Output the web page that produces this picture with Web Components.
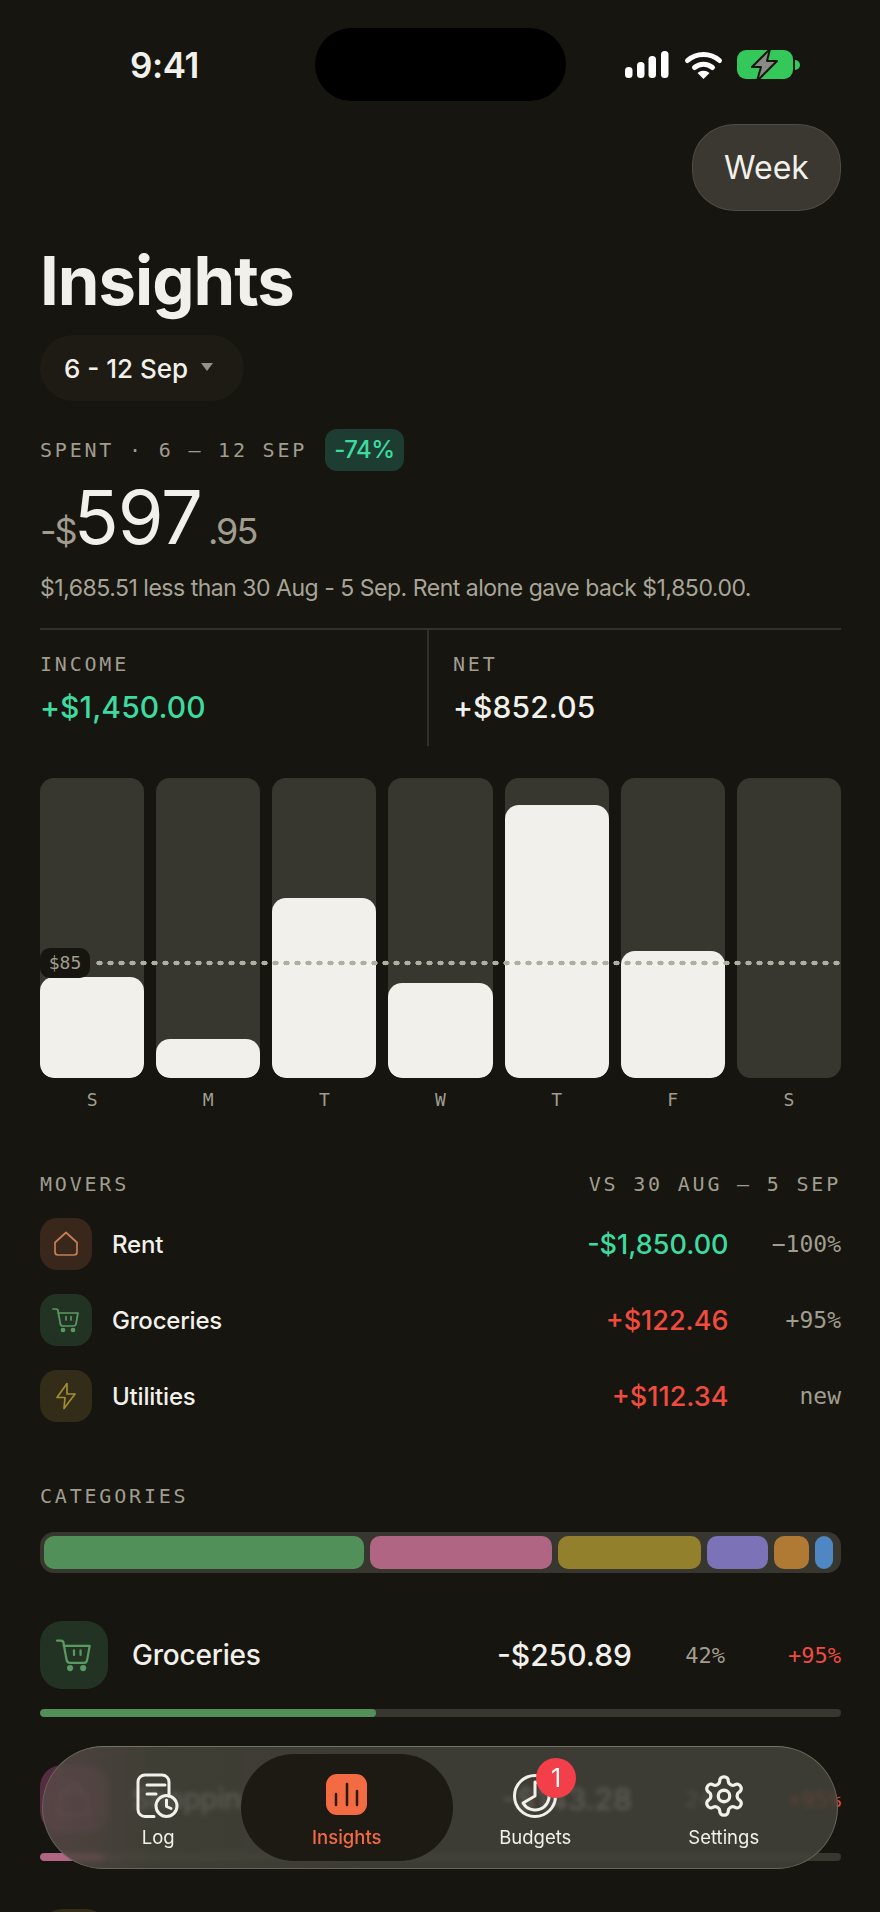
<!DOCTYPE html>
<html>
<head>
<meta charset="utf-8">
<title>Insights</title>
<style>
  html, body { margin: 0; height: 1912px; overflow: hidden; background: #16150f; }
  body { position: relative; font-family: Inter, "Liberation Sans", sans-serif; color: #f2f0ea; }
  main { padding: 0 39px 0 40px; }
</style>
</head>
<body>
<main>
  <status-bar time="9:41"></status-bar>
  <range-head title="Insights" range="6 - 12 Sep" mode="Week"></range-head>
  <spend-summary></spend-summary>
  <week-chart></week-chart>
  <section-label left="MOVERS" right="VS 30 AUG – 5 SEP" top="60"></section-label>
  <mover-row icon="house" name="Rent" amount="-$1,850.00" tone="good" pct="−100%"></mover-row>
  <mover-row icon="cart" name="Groceries" amount="+$122.46" tone="bad" pct="+95%"></mover-row>
  <mover-row icon="bolt" name="Utilities" amount="+$112.34" tone="bad" pct="new"></mover-row>
  <section-label left="CATEGORIES" top="62"></section-label>
  <cat-stack></cat-stack>
  <cat-row icon="cart" name="Groceries" amount="-$250.89" share="42%" change="+95%" fill="42" color="#52905a"></cat-row>
  <cat-row icon="bag" name="Shopping" amount="-$143.28" share="24%" change="+95%" fill="8" color="#b06583"></cat-row>
  <cat-row icon="bolt" fill="19" color="#93802c"></cat-row>
</main>
<tab-bar></tab-bar>

<script>
const MONO = '"DejaVu Sans Mono", "Liberation Mono", monospace';
const ICONS = {
  house: { bg: '#3a271c', stroke: '#c47f52', d: 'M15 24.5 26 14.5 37 24.5V34a3 3 0 0 1-3 3H18a3 3 0 0 1-3-3Z' },
  cart: { bg: '#223323', stroke: '#5a9a62', d: 'M13 15h3a2 2 0 0 1 2 2l2.4 13a2.5 2.5 0 0 0 2.5 2h10.6a2.5 2.5 0 0 0 2.5-2L38 19H18M26 22.5v3.5M31 22.5v3.5', dots: [[23, 36], [33, 36]] },
  bolt: { bg: '#322c18', stroke: '#a08d30', d: 'M27 13.5 17 27.5h8L24 38.5 35 24h-8Z' },
  bag: { bg: '#552c40', stroke: '#b06583', d: 'M17 21h18l2 15a2 2 0 0 1-2 2H17a2 2 0 0 1-2-2ZM21 21v-2a5 5 0 0 1 10 0v2' }
};

function tileSvg(name, size) {
  const ic = ICONS[name];
  const dots = (ic.dots || []).map(p => `<circle cx="${p[0]}" cy="${p[1]}" r="1.5" fill="${ic.stroke}"/>`).join('');
  return `<svg width="${size}" height="${size}" viewBox="0 0 52 52" fill="none" stroke="${ic.stroke}" stroke-width="1.7" stroke-linecap="round" stroke-linejoin="round"><path d="${ic.d}"/>${dots}</svg>`;
}

class StatusBar extends HTMLElement {
  connectedCallback() {
    this.attachShadow({mode: 'open'}).innerHTML = `
      <style>
        :host { display: grid; grid-template-columns: 275px 251px 1fr; height: 73px; padding-top: 28px; margin: 0 -39px 0 0; align-items: center; }
        .time { padding-left: 90px; font-size: 35px; font-weight: 600; letter-spacing: -.4px; }
        .island { height: 73px; border-radius: 37px; background: #000; }
        .icons { padding-left: 59px; display: flex; }
      </style>
      <div class="time">${this.getAttribute('time')}</div>
      <div class="island"></div>
      <div class="icons">
        <svg width="176" height="30" viewBox="0 0 176 30">
          <g fill="#fff">
            <rect x="0" y="17" width="7.5" height="11" rx="3.5"/>
            <rect x="12" y="12" width="7.5" height="16" rx="3.5"/>
            <rect x="23.500" y="6" width="7.5" height="22" rx="3.5"/>
            <rect x="36" y="1" width="7.5" height="27" rx="3.5"/>
          </g>
          <g fill="none" stroke="#fff" stroke-width="5" stroke-linecap="round">
            <path d="M62.500 10.500a24 24 0 0 1 32 0"/>
            <path d="M69.500 17.500a14 14 0 0 1 18 0"/>
          </g>
          <path d="M72.500 23a9 9 0 0 1 12 0l-6 6z" fill="#fff"/>
          <rect x="112" y="0" width="56" height="29" rx="9" fill="#34c759"/>
          <path d="M170 10a5 5 0 0 1 0 10z" fill="#34c759"/>
          <path d="M145 -1 127 17h9l-4 14 20-20h-10z" fill="#8a8a84" stroke="#16150f" stroke-width="2" stroke-linejoin="round"/>
        </svg>
      </div>`;
  }
}

class RangeHead extends HTMLElement {
  connectedCallback() {
    this.attachShadow({mode: 'open'}).innerHTML = `
      <style>
        :host { display: block; }
        .top { display: flex; justify-content: flex-end; margin-top: 23px; }
        .mode { width: 147px; height: 85px; display: flex; align-items: center; justify-content: center; border: 1px solid #4e4c44; border-radius: 43px / 40px; background: #3a3831; font-size: 32px; color: #f2f0ea; }
        h1 { margin: 32px 0 0; font-size: 67px; line-height: 76px; font-weight: 700; letter-spacing: -1px; color: #f2f0ea; }
        .range { display: flex; width: fit-content; align-items: center; gap: 13px; height: 66px; margin-top: 16px; padding: 0 31px 0 24px; border-radius: 33px; background: #1d1b14; font-size: 26px; font-weight: 500; }
        .tri { width: 0; height: 0; margin-top: -3px; border: 6.500px solid transparent; border-top: 8px solid #94918a; border-bottom: 0; }
      </style>
      <div class="top"><div class="mode">${this.getAttribute('mode')}</div></div>
      <h1>${this.getAttribute('title')}</h1>
      <div class="range"><span>${this.getAttribute('range')}</span><span class="tri"></span></div>`;
  }
}

class SpendSummary extends HTMLElement {
  connectedCallback() {
    this.attachShadow({mode: 'open'}).innerHTML = `
      <style>
        :host { display: block; margin-top: 28px; }
        .label { font-family: ${MONO}; font-size: 20px; letter-spacing: 2.8px; color: #a09d90; }
        .spent { display: flex; align-items: center; gap: 18px; height: 42px; }
        .badge { padding: 0 9px; height: 42px; line-height: 42px; border-radius: 12px; background: #1e3d32; color: #3ddba0; font-size: 24px; font-weight: 500; letter-spacing: -.5px; }
        .amount { display: flex; align-items: baseline; height: 74px; margin-top: 9px; line-height: 74px; color: #a09d90; font-size: 36px; letter-spacing: -2px; }
        .amount b { font-size: 74px; font-weight: 400; color: #f2f0ea; letter-spacing: -1px; margin: 0 6px 0 -2px; }
        .desc { margin-top: 19px; font-size: 23px; line-height: 30px; color: #a8a598; letter-spacing: -.48px; }
        .split { display: grid; grid-template-columns: 387px 1fr; height: 116px; margin-top: 25px; border-top: 2px solid #33322a; }
        .split > div { padding-top: 22px; }
        .split > div + div { padding-left: 24px; border-left: 2px solid #33322a; }
        .val { margin-top: 13px; font-size: 30px; line-height: 36px; font-weight: 500; color: #f2f0ea; letter-spacing: .1px; }
        .val.good { color: #3ddba0; }
      </style>
      <div class="spent"><span class="label">SPENT · 6 – 12 SEP</span><span class="badge">-74%</span></div>
      <div class="amount"><span>-$</span><b>597</b><span>.95</span></div>
      <div class="desc">$1,685.51 less than 30 Aug - 5 Sep. Rent alone gave back $1,850.00.</div>
      <div class="split">
        <div><div class="label">INCOME</div><div class="val good">+$1,450.00</div></div>
        <div><div class="label">NET</div><div class="val">+$852.05</div></div>
      </div>`;
  }
}

class WeekChart extends HTMLElement {
  connectedCallback() {
    const days = [['S', 101], ['M', 39], ['T', 180], ['W', 95], ['T', 273], ['F', 127], ['S', 0]];
    const cols = days.map(d => `
      <div class="col">
        <div class="track"><div class="bar" style="height:${d[1]}px"></div></div>
        <div class="day">${d[0]}</div>
      </div>`).join('');
    this.attachShadow({mode: 'open'}).innerHTML = `
      <style>
        :host { display: block; position: relative; margin-top: 32px; }
        .cols { display: grid; grid-template-columns: repeat(7, 1fr); gap: 12px; }
        .track { position: relative; height: 300px; border-radius: 14px; background: #38372f; overflow: hidden; }
        .bar { position: absolute; left: 0; right: 0; bottom: 0; border-radius: 14px; background: #f2f0ea; }
        .day { margin-top: 10px; height: 24px; line-height: 24px; text-align: center; font-family: ${MONO}; font-size: 18px; color: #a09d90; }
        .avg { position: absolute; left: 54px; right: 0; top: 182px; height: 6px; background: radial-gradient(ellipse 3.4px 2.6px, #b0aea3 85%, transparent 100%) 0 0 / 11px 6px repeat-x; }
        .tag { position: absolute; left: 0; top: 170px; width: 50px; height: 30px; line-height: 30px; text-align: center; border-radius: 10px; background: #16150f; font-family: ${MONO}; font-size: 18px; color: #a09d90; }
      </style>
      <div class="cols">${cols}</div>
      <div class="avg"></div>
      <div class="tag">$85</div>`;
  }
}

class SectionLabel extends HTMLElement {
  connectedCallback() {
    this.attachShadow({mode: 'open'}).innerHTML = `
      <style>
        :host { display: flex; justify-content: space-between; margin-top: ${this.getAttribute('top')}px; margin-bottom: -2px; height: 24px; line-height: 24px; font-family: ${MONO}; font-size: 20px; letter-spacing: 2.8px; color: #a09d90; }
      </style>
      <span>${this.getAttribute('left')}</span><span>${this.getAttribute('right') || ''}</span>`;
  }
}

class MoverRow extends HTMLElement {
  connectedCallback() {
    const ic = this.getAttribute('icon');
    this.attachShadow({mode: 'open'}).innerHTML = `
      <style>
        :host { display: flex; align-items: center; height: 52px; margin-top: 24px; }
        .tile { flex: none; width: 52px; height: 52px; border-radius: 17px; background: ${ICONS[ic].bg}; }
        svg { display: block; }
        .name { flex: 1; margin-left: 20px; font-size: 24px; font-weight: 500; color: #f2f0ea; letter-spacing: -.2px; }
        .amt { font-size: 27px; font-weight: 500; }
        .good { color: #3ddba0; }
        .bad { color: #ef4c3f; }
        .pct { width: 112.500px; text-align: right; font-family: ${MONO}; font-size: 23px; color: #a09d90; }
      </style>
      <div class="tile">${tileSvg(ic, 52)}</div>
      <div class="name">${this.getAttribute('name')}</div>
      <div class="amt ${this.getAttribute('tone')}">${this.getAttribute('amount')}</div>
      <div class="pct">${this.getAttribute('pct')}</div>`;
  }
}

class CatStack extends HTMLElement {
  connectedCallback() {
    const segs = [[320, '#52905a'], [182, '#b06583'], [143, '#93802c'], [61, '#7b72b8'], [35, '#b07a34'], [18, '#4f87c4']];
    this.attachShadow({mode: 'open'}).innerHTML = `
      <style>
        :host { display: flex; gap: 6px; height: 33px; margin-top: 26px; padding: 4px; border-radius: 14px; background: #38372f; overflow: hidden; }
        div { border-radius: 10px; }
      </style>
      ${segs.map(s => `<div style="flex:none;width:${s[0]}px;background:${s[1]}"></div>`).join('')}`;
  }
}

class CatRow extends HTMLElement {
  connectedCallback() {
    const ic = this.getAttribute('icon');
    const name = this.getAttribute('name');
    this.attachShadow({mode: 'open'}).innerHTML = `
      <style>
        :host { display: block; margin-top: 48px; }
        .row { display: flex; align-items: center; height: 68px; }
        .tile { flex: none; width: 68px; height: 68px; border-radius: 22px; background: ${ICONS[ic].bg}; }
        svg { display: block; }
        .name { flex: 1; margin-left: 24px; font-size: 28px; font-weight: 500; letter-spacing: -.2px; }
        .amt { font-size: 30px; font-weight: 500; }
        .share { width: 93px; text-align: right; font-family: ${MONO}; font-size: 22px; color: #a09d90; }
        .chg { width: 116px; text-align: right; font-family: ${MONO}; font-size: 22px; color: #ef4c3f; }
        .bar { height: 8px; margin-top: 20px; border-radius: 4px; background: #38372f; overflow: hidden; }
        .fill { height: 100%; border-radius: 4px; }
      </style>
      <div class="row">
        <div class="tile">${tileSvg(ic, 68)}</div>
        ${name ? `<div class="name">${name}</div>
        <div class="amt">${this.getAttribute('amount')}</div>
        <div class="share">${this.getAttribute('share')}</div>
        <div class="chg">${this.getAttribute('change')}</div>` : ''}
      </div>
      <div class="bar"><div class="fill" style="width:${this.getAttribute('fill')}%;background:${this.getAttribute('color')}"></div></div>`;
  }
}

class TabBar extends HTMLElement {
  connectedCallback() {
    this.attachShadow({mode: 'open'}).innerHTML = `
      <style>
        :host { position: absolute; left: 42px; top: 1746px; width: 796px; height: 123px; box-sizing: border-box; display: grid; grid-template-columns: repeat(4, 188.5px); padding: 7px 21px; border: 1.5px solid #66645a; border-top-color: #6e7562; border-radius: 62px; background: linear-gradient(90deg, rgba(150, 90, 110, .22), rgba(80, 84, 66, .12) 14%, transparent 40%), rgba(68, 66, 58, .86); -webkit-backdrop-filter: blur(2.5px); backdrop-filter: blur(2.5px); }
        .tab { position: relative; display: flex; flex-direction: column; align-items: center; padding-top: 19px; font-size: 18.5px; line-height: 26px; color: #f2f0ea; }
        .tab svg { display: block; height: 46px; margin-bottom: 5px; }
        .on { margin: 0 -12px; border-radius: 54px; background: #1c1a13; color: #f26b43; font-weight: 500; }
        .dot { position: absolute; left: 95px; top: 4px; width: 40px; height: 40px; line-height: 40px; border-radius: 50%; background: #f23f4a; color: #fff; text-align: center; font-size: 25px; }
      </style>
      <div class="tab">
        <svg width="46" height="46" viewBox="0 0 46 46" fill="none" stroke="#f2f0ea" stroke-width="3" stroke-linecap="round" stroke-linejoin="round">
          <path d="M19 43.500H10a7 7 0 0 1-7-7V9a7 7 0 0 1 7-7h17a7 7 0 0 1 7 7v14"/>
          <path d="M12 12h18M12 21h9"/>
          <circle cx="31.500" cy="33" r="10.500"/>
          <path d="M31.500 27v6.500l4.500 2"/>
        </svg>
        <span>Log</span>
      </div>
      <div class="tab on">
        <svg width="46" height="46" viewBox="0 0 46 46" fill="none">
          <rect x="2" y="1" width="41" height="41" rx="11" fill="#f26b43"/>
          <path d="M12 21v11M23 11v21M33 18v14" stroke="#2a1a12" stroke-width="2.500" stroke-linecap="round"/>
        </svg>
        <span>Insights</span>
      </div>
      <div class="tab">
        <svg width="46" height="46" viewBox="0 0 46 46" fill="none" stroke="#f2f0ea" stroke-width="3" stroke-linecap="round" stroke-linejoin="round">
          <circle cx="23" cy="23" r="20.500"/>
          <path d="M23 9a14 14 0 1 1-12 21l12-7Z"/>
        </svg>
        <span>Budgets</span>
        <div class="dot">1</div>
      </div>
      <div class="tab">
        <svg width="46" height="46" viewBox="0 0 24 24" fill="none" stroke="#f2f0ea" stroke-width="1.700" stroke-linecap="round" stroke-linejoin="round">
          <path d="M12.220 2h-.44a2 2 0 0 0-2 2v.18a2 2 0 0 1-1 1.730l-.43.25a2 2 0 0 1-2 0l-.15-.08a2 2 0 0 0-2.730.73l-.22.38a2 2 0 0 0 .73 2.730l.15.1a2 2 0 0 1 1 1.720v.51a2 2 0 0 1-1 1.740l-.15.09a2 2 0 0 0-.73 2.730l.22.38a2 2 0 0 0 2.730.73l.15-.08a2 2 0 0 1 2 0l.43.25a2 2 0 0 1 1 1.730V20a2 2 0 0 0 2 2h.44a2 2 0 0 0 2-2v-.18a2 2 0 0 1 1-1.730l.43-.25a2 2 0 0 1 2 0l.15.08a2 2 0 0 0 2.730-.73l.22-.39a2 2 0 0 0-.73-2.730l-.15-.08a2 2 0 0 1-1-1.740v-.5a2 2 0 0 1 1-1.740l.15-.09a2 2 0 0 0 .73-2.730l-.22-.38a2 2 0 0 0-2.730-.73l-.15.08a2 2 0 0 1-2 0l-.43-.25a2 2 0 0 1-1-1.730V4a2 2 0 0 0-2-2z"/>
          <circle cx="12" cy="12" r="3"/>
        </svg>
        <span>Settings</span>
      </div>`;
  }
}

customElements.define('status-bar', StatusBar);
customElements.define('range-head', RangeHead);
customElements.define('spend-summary', SpendSummary);
customElements.define('week-chart', WeekChart);
customElements.define('section-label', SectionLabel);
customElements.define('mover-row', MoverRow);
customElements.define('cat-stack', CatStack);
customElements.define('cat-row', CatRow);
customElements.define('tab-bar', TabBar);
</script>
</body>
</html>
